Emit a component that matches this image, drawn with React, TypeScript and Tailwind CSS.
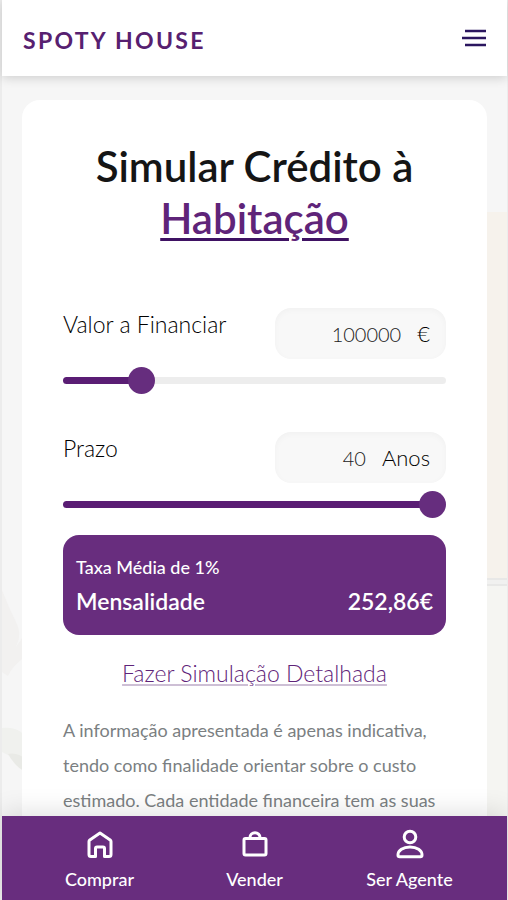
import { useState } from "react";
import type { CSSProperties, ReactNode } from "react";

const MIN_AMOUNT = 10000;
const MAX_AMOUNT = 500000;
const MIN_YEARS = 5;
const MAX_YEARS = 40;
const YEARLY_RATE = 0.01;

const THUMB_SIZE = 27;

interface SliderFieldProps {
  id: string;
  label: string;
  unit: string;
  value: number;
  min: number;
  max: number;
  step: number;
  onChange: (value: number) => void;
}

interface NavItemProps {
  label: string;
  children: ReactNode;
}

const getMonthlyPayment = (amount: number, years: number) => {
  const rate = YEARLY_RATE / 12;
  return (amount * rate) / (1 - Math.pow(1 + rate, -years * 12));
};

const SliderField = ({ id, label, unit, value, min, max, step, onChange }: SliderFieldProps) => {
  const ratio = Math.min(1, Math.max(0, (value - min) / (max - min)));
  const fill = `calc(${ratio * 100}% + ${THUMB_SIZE / 2 - ratio * THUMB_SIZE}px)`;
  const trackStyle: CSSProperties = {
    backgroundImage: `linear-gradient(to right, #5a1d74 ${fill}, #ededed ${fill})`,
  };

  return (
    <div>
      <div className="flex items-start justify-between">
        <label htmlFor={id} className="text-[23px] leading-8 font-light text-black">
          {label}
        </label>
        <div className="flex h-[51px] w-[171px] items-center gap-4 rounded-2xl bg-[#f8f8f8] px-4 text-[22px] font-light text-black shadow-[inset_0_2px_6px_rgba(0,0,0,0.03)]">
          <input
            id={id}
            type="text"
            inputMode="numeric"
            className="w-full min-w-0 flex-1 bg-transparent text-right text-xl text-[#222] outline-none"
            value={value}
            onChange={(event) => onChange(Number(event.target.value.replace(/\D/g, "")))}
          />
          <span>{unit}</span>
        </div>
      </div>
      <input
        type="range"
        aria-label={label}
        className="mt-[18px] block h-[7px] w-full cursor-pointer appearance-none rounded-full outline-none [&::-webkit-slider-thumb]:size-[27px] [&::-webkit-slider-thumb]:appearance-none [&::-webkit-slider-thumb]:rounded-full [&::-webkit-slider-thumb]:bg-[#662d7e]"
        style={trackStyle}
        min={min}
        max={max}
        step={step}
        value={value}
        onChange={(event) => onChange(Number(event.target.value))}
      />
    </div>
  );
};

const NavItem = ({ label, children }: NavItemProps) => (
  <a href="#" className="flex flex-1 flex-col items-center gap-1 pt-3 text-white">
    <svg
      width="32"
      height="32"
      viewBox="0 0 32 32"
      fill="none"
      stroke="currentColor"
      strokeWidth="3"
      strokeLinecap="round"
      strokeLinejoin="round"
      aria-hidden="true"
    >
      {children}
    </svg>
    <span className="text-lg leading-[30px] font-medium">{label}</span>
  </a>
);

// Faded room photo behind the card: cream wall, shelf and a plant
const Backdrop = () => (
  <div className="absolute inset-0 flex justify-between bg-[#f6f6f6]" aria-hidden="true">
    <svg className="h-full w-6" viewBox="0 0 24 740" preserveAspectRatio="xMinYMax slice">
      <path d="M0 514 Q6 530 14 546 T10 576 Q18 566 24 556 V580 Q10 590 6 600 L0 596Z" fill="#f2f1f0" />
      <path d="M0 652 Q14 650 24 660 V694 Q14 690 8 680 L0 676Z" fill="#f0f1ee" />
      <path d="M6 678 Q16 676 24 684 V696 Q14 692 6 678Z" fill="#e9eae6" />
    </svg>
    <div className="flex w-5 flex-col pt-[136px]">
      <div className="h-[366px] bg-[#f6f2ec]" />
      <div className="h-2 border-y-2 border-[#e8e8e7] bg-[#f1f1f0]" />
      <div className="flex-1 bg-[#f5f5f2]" />
    </div>
  </div>
);

export default function App() {
  const [amount, setAmount] = useState(100000);
  const [years, setYears] = useState(40);

  const payment = years > 0 ? getMonthlyPayment(amount, years) : 0;

  return (
    <div className="flex h-screen flex-col border-r border-l-2 border-[#ececec] bg-[#f6f6f6] font-['Lato',sans-serif]">
      <header className="z-10 flex h-[76px] shrink-0 items-center justify-between bg-white px-[21px] shadow-[0_2px_10px_rgba(0,0,0,0.16)]">
        <a href="#" className="pt-1 text-[23px] font-bold tracking-widest text-[#572070]">
          SPOTY HOUSE
        </a>
        <button type="button" aria-label="Menu" className="text-[#2b165f]">
          <svg width="24" height="18" viewBox="0 0 24 18" stroke="currentColor" strokeWidth="2.4" aria-hidden="true">
            <path d="M3 2H24M0 9H24M3 16H24" />
          </svg>
        </button>
      </header>

      <main className="relative min-h-0 flex-1 overflow-hidden">
        <Backdrop />
        <section className="relative mx-5 mt-6 min-h-full rounded-[18px] bg-white px-[41px] pt-10 pb-10">
          <h1 className="text-center text-[42px] leading-[52px] font-semibold text-[#151515]">
            Simular Crédito à<br />
            <span className="text-[#5f2479] underline decoration-[#3f1263] decoration-[3px] underline-offset-4">
              Habitação
            </span>
          </h1>

          <div className="mt-16 flex flex-col gap-12">
            <SliderField
              id="amount"
              label="Valor a Financiar"
              unit="€"
              value={amount}
              min={MIN_AMOUNT}
              max={MAX_AMOUNT}
              step={1000}
              onChange={setAmount}
            />
            <SliderField
              id="years"
              label="Prazo"
              unit="Anos"
              value={years}
              min={MIN_YEARS}
              max={MAX_YEARS}
              step={1}
              onChange={setYears}
            />
          </div>

          <div className="mt-[27px] rounded-2xl bg-[#682d7e] px-[13px] py-4 text-white">
            <p className="text-lg leading-8 font-medium">Taxa Média de 1%</p>
            <p className="flex justify-between text-[23px] leading-9 font-semibold">
              <span>Mensalidade</span>
              <span>{payment.toFixed(2).replace(".", ",")}€</span>
            </p>
          </div>

          <p className="mt-[22px] text-center text-[23px] leading-8 font-light">
            <a
              href="#"
              className="text-[#5f2479] underline decoration-[#cdbfd5] decoration-2 underline-offset-2"
            >
              Fazer Simulação Detalhada
            </a>
          </p>

          <p className="mt-6 text-lg leading-[35px] text-[#7b7f82]">
            A informação apresentada é apenas indicativa, tendo como finalidade orientar sobre o custo
            estimado. Cada entidade financeira tem as suas
          </p>
        </section>
      </main>

      <nav className="z-10 flex h-[84px] shrink-0 bg-[#682d7e] px-5 shadow-[0_-4px_24px_rgba(0,0,0,0.12)]">
        <NavItem label="Comprar">
          <path d="M5 13.500a2 2 0 0 1 .8-1.600L16 5l10.200 6.900a2 2 0 0 1 .8 1.600V26.500a2 2 0 0 1-2 2h-4.500V20.500a1.500 1.500 0 0 0-1.500-1.500h-6a1.500 1.500 0 0 0-1.500 1.500V28.500H7a2 2 0 0 1-2-2Z" />
        </NavItem>
        <NavItem label="Vender">
          <rect x="5" y="10.500" width="22" height="16.500" rx="1.500" />
          <path d="M11 10V9.500a5 4.800 0 0 1 10 0V10" />
        </NavItem>
        <NavItem label="Ser Agente">
          <circle cx="16" cy="9" r="5.800" />
          <path d="M4 27C4 22.500 9 19 16 19s12 3.500 12 8c0 1-.7 1.800-1.700 1.800H5.700C4.700 28.800 4 28 4 27Z" />
        </NavItem>
      </nav>
    </div>
  );
}
